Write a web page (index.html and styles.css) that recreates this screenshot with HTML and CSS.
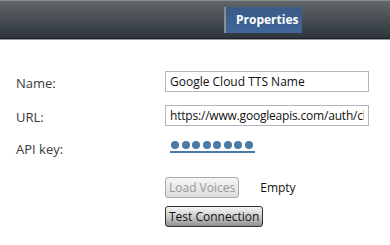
FILE: index.html
```html
<!DOCTYPE html>
<html lang="en">
<head>
    <meta charset="UTF-8">
    <meta name="viewport" content="width=device-width, initial-scale=1.0">
    <title>Properties</title>
    <link rel="stylesheet" href="styles.css">
</head>
<body>
    <div class="toolbar">
        <div class="tab">Properties</div>
    </div>
    <div class="panel">
        <div class="row">
            <label>Name:</label>
            <input type="text" value="Google Cloud TTS Name">
        </div>
        <div class="row">
            <label>URL:</label>
            <input type="text" class="url" value="https://www.googleapis.com/auth/cloud-platform">
        </div>
        <div class="row key-row">
            <label>API key:</label>
            <a class="secret" href="#" title="API key">
                <span class="dot"></span><span class="dot"></span><span class="dot"></span><span class="dot"></span>
                <span class="dot"></span><span class="dot"></span><span class="dot"></span><span class="dot"></span>
            </a>
        </div>
        <div class="actions">
            <div class="line">
                <button class="btn" disabled>Load Voices</button>
                <span class="status">Empty</span>
            </div>
            <div class="line">
                <button class="btn">Test Connection</button>
            </div>
        </div>
    </div>
</body>
</html>
```
FILE: styles.css
```css
body {
    margin: 0;
    font-family: "Open Sans", "DejaVu Sans", sans-serif;
    background: #fff;
    color: #333;
}
.toolbar {
    height: 39px;
    background: linear-gradient(#62666a, #2d353c);
    border-top: 1px solid #8a8d90;
    border-bottom: 1px solid #1e2226;
    box-shadow: 0 1px 0 #9a9a9a;
    display: flex;
    align-items: flex-start;
    padding-left: 224px;
    padding-top: 6px;
    box-sizing: border-box;
}
.tab {
    height: 26px;
    width: 56px;
    padding: 0 10px;
    border-left: 2px solid #8a8d90;
    background: linear-gradient(#3a5a86, #41679a);
    color: #fff;
    font-weight: bold;
    font-size: 12px;
    line-height: 25px;
    text-align: center;
}
.panel {
    padding: 32px 0 0 16px;
}
.row {
    display: flex;
    align-items: center;
    height: 21px;
    margin-bottom: 13px;
}
.row label {
    width: 149px;
    font-size: 13px;
    color: #3a3a3a;
    padding-top: 2px;
}
.row input {
    width: 204px;
    height: 21px;
    box-sizing: border-box;
    border: 1px solid #b4b4be;
    padding: 0 4px;
    font-family: inherit;
    font-size: 12px;
    color: #111;
}
.row input.url {
    letter-spacing: -0.2px;
}
.key-row {
    height: 18px;
}
.secret {
    display: flex;
    gap: 2.5px;
    margin-left: 5px;
    margin-top: -3px;
    padding: 0 2px 2px 1px;
    border-bottom: 2px solid #4a7aa8;
}
.dot {
    width: 8px;
    height: 8px;
    border-radius: 50%;
    background: #4a7aa8;
}
.actions {
    padding-left: 149px;
    margin-top: 20px;
}
.line {
    display: flex;
    align-items: center;
    margin-bottom: 8px;
}
.btn {
    height: 21px;
    padding: 0 3px;
    border: 1px solid #333;
    border-radius: 3px;
    background: linear-gradient(#f4f4f4, #c9c9c9 55%, #8e8e8e);
    font-family: inherit;
    font-size: 12px;
    color: #111;
}
.btn:disabled {
    border-color: #aaa;
    color: #999;
    background: linear-gradient(#f6f6f6, #dcdcdc);
}
.status {
    margin-left: 21px;
    font-size: 12px;
    color: #111;
}
```
